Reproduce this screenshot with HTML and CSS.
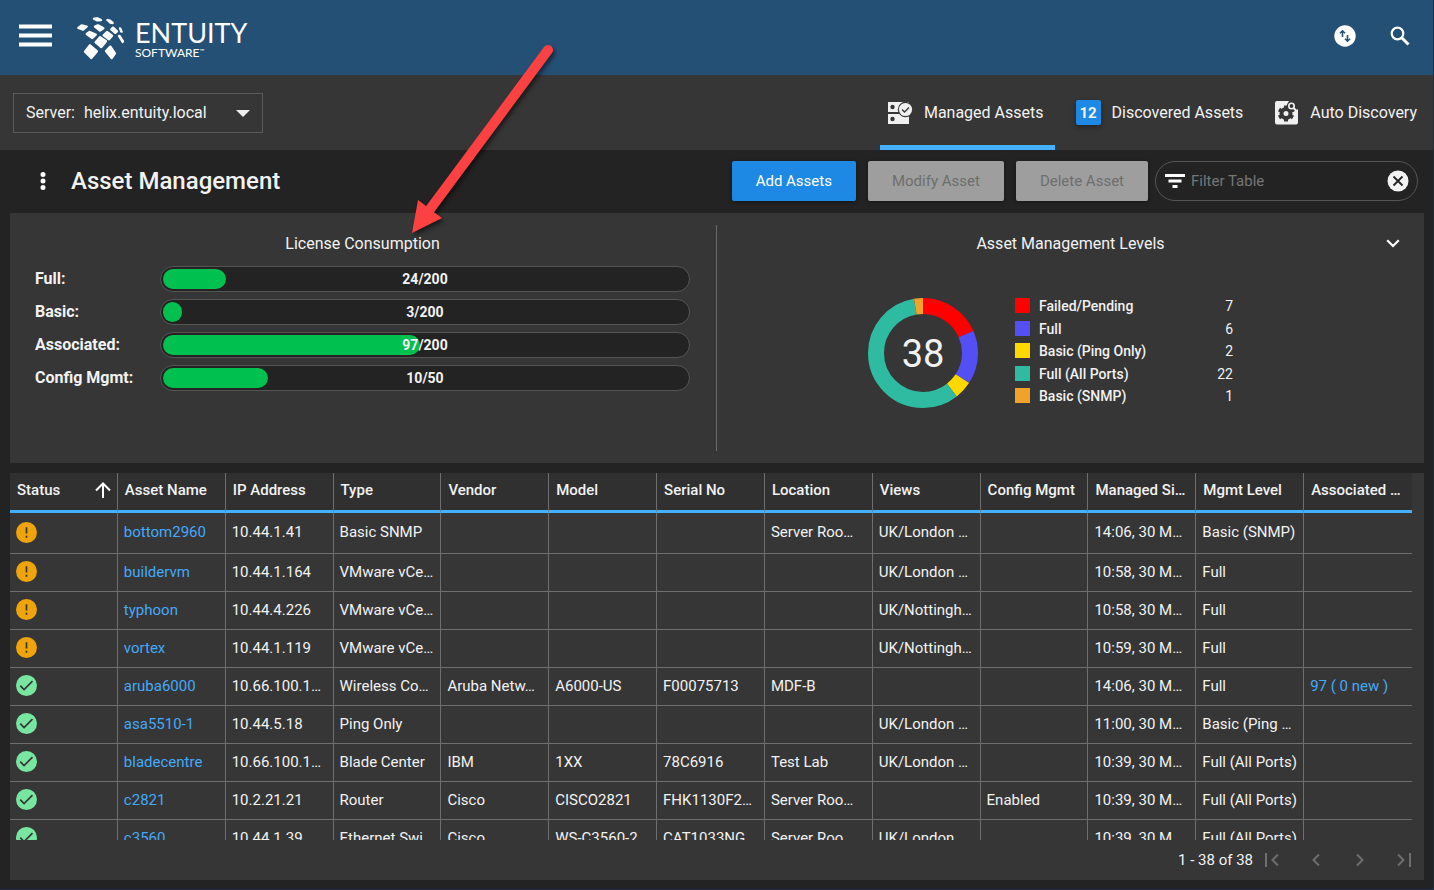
FILE: index.html
```html
<!DOCTYPE html>
<html lang="en">
<head>
<meta charset="utf-8">
<title>Entuity - Asset Management</title>
<link rel="stylesheet" href="styles.css">
</head>
<body>
<svg class="defs" aria-hidden="true">
  <symbol id="warn" viewBox="0 0 20 20"><circle cx="10" cy="10" r="10" fill="#eea40a"/><path d="M10 5v6M10 13v2" stroke="#363636" stroke-width="1.600"/></symbol>
  <symbol id="ok" viewBox="0 0 20 20"><circle cx="10" cy="10" r="10" fill="#78e6a0"/><path d="M4 10.200l3.700 3.700 8-8" fill="none" stroke="#363636" stroke-width="1.600"/></symbol>
</svg>
<div class="app">
  <header class="topbar">
    <button class="icon-btn" aria-label="Menu"><svg width="34" height="24" viewBox="0 0 34 24"><path d="M0 2.500h33M0 11.500h33M0 20.500h33" stroke="#fff" stroke-width="4"/></svg></button>
    <a class="logo" href="#" aria-label="Entuity Software">
      <svg width="50" height="44" viewBox="228 48 150 132" fill="#fff" stroke="#fff" stroke-width="7" stroke-linejoin="round">
        <path d="M282 56l10-1 11 5-11 1zM322 60l8 2 8 7-7-1zM235 84l10-8 15 4-11 9zM285 80l9-4 16 9-10 7zM334 88l5-5 12 11-5 5zM360 85l1 1 4 9-1 0zM260 102l9-6 18 8-10 10zM311 106l10-10 15 11-9 11zM357 108l2 0 10 16-1 2zM287 127l13-15 18 12-14 17zM255 155l15-19 21 18-17 20zM318 153l13-13 14 20-10 14z"/>
      </svg>
      <span class="logo-text"><span class="logo-name">ENTUITY</span><span class="logo-sub">SOFTWARE<small>™</small></span></span>
    </a>
    <div class="top-actions">
      <button class="icon-btn" aria-label="Transfers"><svg width="22" height="22" viewBox="0 0 22 22"><circle cx="11" cy="11" r="10.700" fill="#fff"/><path d="M8.500 12V6M6 8.300l2.500-2.500 2.500 2.500M13.500 10v6M11 13.700l2.500 2.500 2.500-2.500" fill="none" stroke="#255075" stroke-width="1.600"/></svg></button>
      <button class="icon-btn" aria-label="Search"><svg width="20" height="20" viewBox="0 0 20 20" fill="none" stroke="#fff"><circle cx="7.500" cy="7.500" r="5.800" stroke-width="2.200"/><path d="M12 12l6.500 6.500" stroke-width="3"/></svg></button>
    </div>
  </header>

  <div class="subbar">
    <div class="server">
      <label for="server">Server:</label>
      <select id="server"><option>helix.entuity.local</option></select>
      <svg class="caret" width="14" height="7" viewBox="0 0 14 7"><path d="M0 0h14l-7 7z" fill="#eee"/></svg>
    </div>
    <nav class="tabs">
      <a class="tab active" href="#"><svg width="25" height="24" viewBox="0 0 25 24"><path fill="#f0f0f0" d="M0 1h21v10H0zM0 13h21v10H0z"/><g fill="#363636"><circle cx="4.500" cy="6" r="2.200"/><circle cx="4.500" cy="18" r="2.200"/><circle cx="17.500" cy="8.500" r="7.700"/></g><circle cx="17.500" cy="8.500" r="6.600" fill="#f0f0f0"/><path d="M14 8.500l2.500 2.500 4.500-4.500" fill="none" stroke="#363636" stroke-width="1.300"/></svg>Managed Assets</a>
      <a class="tab" href="#"><span class="badge">12</span>Discovered Assets</a>
      <a class="tab" href="#"><svg width="24" height="24" viewBox="0 0 24 24"><path fill="#f0f0f0" d="M2 0h12l-2 4 2 5 4 2 5-3v13.500a2 2 0 0 1-2 2H2a2 2 0 0 1-2-2V2a2 2 0 0 1 2-2z"/><circle cx="11" cy="12.500" r="4.500" fill="none" stroke="#363636" stroke-width="4"/><path d="M11 4.500v3M11 17.500v3M4 8.500l2.700 1.600M15.300 14.900l2.700 1.600M4 16.500l2.700-1.600M15.300 10.100l2.700-1.600" stroke="#363636" stroke-width="4"/><circle cx="16.500" cy="5" r="4.600" fill="#363636"/><circle cx="16.500" cy="5" r="2.700" fill="none" stroke="#f0f0f0" stroke-width="1.600"/><path d="M18.500 7l3 3" stroke="#f0f0f0" stroke-width="2"/></svg>Auto Discovery</a>
    </nav>
  </div>

  <main class="main">
    <div class="toolbar">
      <button class="icon-btn kebab" aria-label="More options"><svg width="6" height="18" viewBox="0 0 6 18" fill="#fff"><circle cx="3" cy="2.500" r="2.500"/><circle cx="3" cy="9" r="2.500"/><circle cx="3" cy="15.500" r="2.500"/></svg></button>
      <h1>Asset Management</h1>
      <div class="actions">
        <button class="btn primary">Add Assets</button>
        <button class="btn" disabled>Modify Asset</button>
        <button class="btn" disabled>Delete Asset</button>
      </div>
      <div class="filter">
        <svg width="20" height="14" viewBox="0 0 20 14"><path d="M0 1.500h20M3.500 7h13M7.500 12.500h5" stroke="#fff" stroke-width="3"/></svg>
        <input type="text" placeholder="Filter Table" aria-label="Filter Table">
        <button class="icon-btn" aria-label="Clear filter"><svg width="22" height="22" viewBox="0 0 22 22"><circle cx="11" cy="11" r="10.500" fill="#f2f2f2"/><path d="M6.500 6.500l9 9M15.500 6.500l-9 9" stroke="#232323" stroke-width="1.800"/></svg></button>
      </div>
    </div>

    <div class="summary">
      <section class="license">
        <h2>License Consumption</h2>
        <div class="meter-row"><span class="meter-label">Full:</span><div class="meter"><div class="fill" style="width:12%"></div><span class="value">24/200</span></div></div>
        <div class="meter-row"><span class="meter-label">Basic:</span><div class="meter"><div class="fill" style="width:2%"></div><span class="value">3/200</span></div></div>
        <div class="meter-row"><span class="meter-label">Associated:</span><div class="meter"><div class="fill" style="width:49%"></div><span class="value">97/200</span></div></div>
        <div class="meter-row"><span class="meter-label">Config Mgmt:</span><div class="meter"><div class="fill" style="width:20%"></div><span class="value">10/50</span></div></div>
      </section>
      <section class="levels">
        <h2>Asset Management Levels</h2>
        <button class="icon-btn collapse" aria-label="Collapse"><svg width="14" height="9" viewBox="0 0 14 9"><path d="M1.200 1.200L7 7l5.800-5.800" fill="none" stroke="#fff" stroke-width="2.200"/></svg></button>
        <div class="chart">
          <div class="donut">
            <svg width="110" height="110" viewBox="0 0 110 110" fill="none" stroke-width="16">
              <g transform="rotate(-90 55 55)">
                <circle cx="55" cy="55" r="47" stroke="#ff0000" pathLength="38" stroke-dasharray="7 31"/>
                <circle cx="55" cy="55" r="47" stroke="#544ff5" pathLength="38" stroke-dasharray="6 32" stroke-dashoffset="-7"/>
                <circle cx="55" cy="55" r="47" stroke="#ffd800" pathLength="38" stroke-dasharray="2 36" stroke-dashoffset="-13"/>
                <circle cx="55" cy="55" r="47" stroke="#2fbba2" pathLength="38" stroke-dasharray="22 16" stroke-dashoffset="-15"/>
                <circle cx="55" cy="55" r="47" stroke="#f2a229" pathLength="38" stroke-dasharray="1 37" stroke-dashoffset="-37"/>
              </g>
            </svg>
            <span class="total">38</span>
          </div>
          <ul class="legend">
            <li><i class="swatch failed"></i><b>Failed/Pending</b><span>7</span></li>
            <li><i class="swatch full"></i><b>Full</b><span>6</span></li>
            <li><i class="swatch ping"></i><b>Basic (Ping Only)</b><span>2</span></li>
            <li><i class="swatch ports"></i><b>Full (All Ports)</b><span>22</span></li>
            <li><i class="swatch snmp"></i><b>Basic (SNMP)</b><span>1</span></li>
          </ul>
        </div>
      </section>
    </div>

    <div class="grid-panel">
      <div class="grid-scroll">
        <table>
          <thead><tr>
            <th><span class="sort">Status<svg width="16" height="16" viewBox="0 0 16 16" fill="none" stroke="#fff" stroke-width="2"><path d="M8 16V1.500M1 8.500l7-7 7 7"/></svg></span></th>
            <th>Asset Name</th><th>IP Address</th><th>Type</th><th>Vendor</th><th>Model</th><th>Serial No</th><th>Location</th><th>Views</th><th>Config Mgmt</th><th>Managed Si…</th><th>Mgmt Level</th><th>Associated …</th>
          </tr></thead>
          <tbody>
            <tr><td><svg class="st"><use href="#warn"/></svg></td><td><a href="#">bottom2960</a></td><td>10.44.1.41</td><td>Basic SNMP</td><td></td><td></td><td></td><td>Server Roo…</td><td>UK/London …</td><td></td><td>14:06, 30 M…</td><td>Basic (SNMP)</td><td></td></tr>
            <tr><td><svg class="st"><use href="#warn"/></svg></td><td><a href="#">buildervm</a></td><td>10.44.1.164</td><td>VMware vCe…</td><td></td><td></td><td></td><td></td><td>UK/London …</td><td></td><td>10:58, 30 M…</td><td>Full</td><td></td></tr>
            <tr><td><svg class="st"><use href="#warn"/></svg></td><td><a href="#">typhoon</a></td><td>10.44.4.226</td><td>VMware vCe…</td><td></td><td></td><td></td><td></td><td>UK/Nottingh…</td><td></td><td>10:58, 30 M…</td><td>Full</td><td></td></tr>
            <tr><td><svg class="st"><use href="#warn"/></svg></td><td><a href="#">vortex</a></td><td>10.44.1.119</td><td>VMware vCe…</td><td></td><td></td><td></td><td></td><td>UK/Nottingh…</td><td></td><td>10:59, 30 M…</td><td>Full</td><td></td></tr>
            <tr><td><svg class="st"><use href="#ok"/></svg></td><td><a href="#">aruba6000</a></td><td>10.66.100.1…</td><td>Wireless Co…</td><td>Aruba Netw…</td><td>A6000-US</td><td>F00075713</td><td>MDF-B</td><td></td><td></td><td>14:06, 30 M…</td><td>Full</td><td><a href="#">97 ( 0 new )</a></td></tr>
            <tr><td><svg class="st"><use href="#ok"/></svg></td><td><a href="#">asa5510-1</a></td><td>10.44.5.18</td><td>Ping Only</td><td></td><td></td><td></td><td></td><td>UK/London …</td><td></td><td>11:00, 30 M…</td><td>Basic (Ping …</td><td></td></tr>
            <tr><td><svg class="st"><use href="#ok"/></svg></td><td><a href="#">bladecentre</a></td><td>10.66.100.1…</td><td>Blade Center</td><td>IBM</td><td>1XX</td><td>78C6916</td><td>Test Lab</td><td>UK/London …</td><td></td><td>10:39, 30 M…</td><td>Full (All Ports)</td><td></td></tr>
            <tr><td><svg class="st"><use href="#ok"/></svg></td><td><a href="#">c2821</a></td><td>10.2.21.21</td><td>Router</td><td>Cisco</td><td>CISCO2821</td><td>FHK1130F2…</td><td>Server Roo…</td><td></td><td>Enabled</td><td>10:39, 30 M…</td><td>Full (All Ports)</td><td></td></tr>
            <tr><td><svg class="st"><use href="#ok"/></svg></td><td><a href="#">c3560</a></td><td>10.44.1.39</td><td>Ethernet Swi…</td><td>Cisco</td><td>WS-C3560-2…</td><td>CAT1033NG…</td><td>Server Roo…</td><td>UK/London …</td><td></td><td>10:39, 30 M…</td><td>Full (All Ports)</td><td></td></tr>
          </tbody>
        </table>
      </div>
      <footer class="pager">
        <span>1 - 38 of 38</span>
        <button class="icon-btn" aria-label="First page" disabled><svg width="14" height="14" viewBox="0 0 14 14"><path d="M1 0v14M13 1.500L7.500 7l5.500 5.500"/></svg></button>
        <button class="icon-btn" aria-label="Previous page" disabled><svg width="14" height="14" viewBox="0 0 14 14"><path d="M10 1.500L4.500 7l5.500 5.500"/></svg></button>
        <button class="icon-btn" aria-label="Next page" disabled><svg width="14" height="14" viewBox="0 0 14 14"><path d="M4 1.500l5.500 5.500L4 12.500"/></svg></button>
        <button class="icon-btn" aria-label="Last page" disabled><svg width="14" height="14" viewBox="0 0 14 14"><path d="M13 0v14M1 1.500l5.500 5.500L1 12.500"/></svg></button>
      </footer>
    </div>
  </main>
  <svg class="pointer" width="160" height="210" viewBox="400 35 160 210" aria-hidden="true"><path d="M548 50L428 212" stroke="#fc4142" stroke-width="10" stroke-linecap="round"/><path d="M412 233l6-33 8 6 9 7 7 5z" fill="#fc4142"/></svg>
</div>
</body>
</html>
```
FILE: styles.css
```css
* { box-sizing: border-box; }
body {
  margin: 0;
  background: #232323;
  color: #f2f2f2;
  font: 15px/20px Roboto, sans-serif;
}
a { color: #45a9f9; text-decoration: none; }
button, input, select { font: inherit; color: inherit; }
svg { display: block; flex: none; }
.defs { position: absolute; width: 0; height: 0; }
.icon-btn {
  display: flex;
  padding: 0;
  border: 0;
  background: none;
}
.app {
  position: relative;
  display: flex;
  flex-direction: column;
  height: 100vh;
  border-right: 1px solid #1b2d47;
  border-bottom: 1px solid #1b2d47;
}

.topbar {
  display: flex;
  align-items: center;
  height: 75px;
  padding: 0 23px 0 19px;
  background: #255075;
}
.topbar .icon-btn { padding-bottom: 3px; }
.logo {
  display: flex;
  align-items: center;
  gap: 9px;
  margin-left: 23px;
  color: #fff;
  font-family: Lato, sans-serif;
}
.logo-text { display: flex; flex-direction: column; padding-top: 2px; }
.logo-name { font-size: 27px; line-height: 28px; }
.logo-sub { font-size: 12px; line-height: 12px; }
.logo-sub small { font-size: 6px; vertical-align: top; line-height: 8px; }
.top-actions {
  display: flex;
  align-items: center;
  gap: 34px;
  margin-left: auto;
}

.subbar {
  display: flex;
  align-items: center;
  justify-content: space-between;
  height: 75px;
  padding: 0 5px 0 13px;
  background: #363636;
  font-size: 16px;
}
.server {
  position: relative;
  display: flex;
  align-items: center;
  gap: 9px;
  width: 250px;
  height: 40px;
  padding-left: 12px;
  border: 1px solid #5a5a5a;
}
.server select {
  flex: 1;
  height: 38px;
  padding: 0;
  border: 0;
  background: none;
  appearance: none;
}
.caret { position: absolute; right: 12px; top: 16px; pointer-events: none; }
.tabs { display: flex; align-self: stretch; gap: 13px; }
.tab {
  display: flex;
  align-items: center;
  gap: 11px;
  padding: 5px 11px 0 8px;
  border-bottom: 5px solid transparent;
  color: #f2f2f2;
}
.tab.active { border-color: #45b0fb; }
.badge {
  width: 25px;
  height: 25px;
  border-radius: 2px;
  background: #1e88e5;
  box-shadow: 0 2px 5px rgba(0, 0, 0, .4);
  font-size: 15px;
  font-weight: 700;
  line-height: 26px;
  text-align: center;
}

.main {
  display: flex;
  flex: 1;
  flex-direction: column;
  min-height: 0;
  padding: 0 9px 9px 10px;
}
.toolbar {
  display: flex;
  align-items: center;
  height: 63px;
  padding: 0 6px 1px 30px;
}
h1 {
  margin: 0 auto 0 25px;
  font-size: 24px;
  font-weight: 500;
  line-height: 32px;
}
.actions { display: flex; gap: 12px; margin-right: 7px; }
.btn {
  height: 40px;
  padding: 0 24px;
  border: 0;
  border-radius: 2px;
  background: #9e9e9e;
  color: #6e6e6e;
  box-shadow: 0 1px 4px rgba(0, 0, 0, .4);
}
.btn.primary { background: #1e88e5; color: #fff; }
.filter {
  display: flex;
  align-items: center;
  gap: 6px;
  width: 263px;
  height: 40px;
  padding: 0 8px 0 9px;
  border: 1px solid #555;
  border-radius: 20px;
}
.filter input {
  flex: 1;
  min-width: 0;
  padding: 0;
  border: 0;
  outline: 0;
  background: none;
}
.filter input::placeholder { color: #767676; opacity: 1; }

.summary {
  display: grid;
  grid-template-columns: minmax(0, 1fr) minmax(0, 1fr);
  height: 250px;
  padding: 12px 0;
  background: #363636;
}
.levels { position: relative; }
.license {
  padding: 0 26px 0 25px;
  border-right: 1px solid #6a6a6a;
}
h2 {
  margin: 0;
  padding: 9px 0 7px;
  font-size: 16px;
  font-weight: 400;
  line-height: 20px;
  text-align: center;
}
.license h2 { margin-bottom: 5px; }
.meter-row {
  display: flex;
  align-items: center;
  margin-bottom: 7px;
}
.meter-label { width: 125px; font-size: 16px; font-weight: 700; }
.meter {
  position: relative;
  flex: 1;
  height: 26px;
  padding: 2px;
  border: 1px solid #555;
  border-radius: 13px;
  background: #232323;
}
.fill {
  min-width: 19px;
  height: 20px;
  border-radius: 10px;
  background: #00c04f;
}
.value {
  position: absolute;
  inset: 0;
  font-size: 14px;
  font-weight: 700;
  line-height: 24px;
  text-align: center;
}
.collapse { position: absolute; top: 14px; right: 24px; }
.chart {
  display: flex;
  justify-content: center;
  gap: 37px;
  padding: 37px 40px 0 0;
}
.donut { position: relative; }
.total {
  position: absolute;
  inset: 0;
  font-size: 38px;
  line-height: 112px;
  text-align: center;
}
.legend {
  display: flex;
  flex-direction: column;
  justify-content: space-between;
  width: 218px;
  margin: 0;
  padding: 0 0 4px;
  list-style: none;
  font-size: 14px;
  line-height: 16px;
}
.legend li { display: flex; gap: 9px; }
.legend b { flex: 1; font-weight: 500; }
.swatch { width: 15px; height: 15px; }
.failed { background: #ff0000; }
.full { background: #544ff5; }
.ping { background: #ffd800; }
.ports { background: #2fbba2; }
.snmp { background: #f2a229; }

.grid-panel {
  display: flex;
  flex: 1;
  flex-direction: column;
  min-height: 0;
  margin-top: 10px;
  background: #363636;
}
.grid-scroll { flex: 1; min-height: 0; overflow: hidden; padding-right: 12px; }
table {
  width: 100%;
  table-layout: fixed;
  border-collapse: separate;
  border-spacing: 0;
}
th, td {
  overflow: hidden;
  border-right: 1px solid #6e6e6e;
  text-align: left;
  white-space: nowrap;
}
th:last-child, td:last-child { border-right: 0; }
th {
  height: 40px;
  padding: 0 6px 3px 7px;
  border-bottom: 3px solid #45b0fb;
  background: #303030;
  font-weight: 500;
}
td {
  height: 38px;
  padding: 0 6px 2px;
  border-bottom: 1px solid #6e6e6e;
}
tbody tr:first-child td { height: 41px; }
.sort { display: flex; align-items: center; justify-content: space-between; }
.st { width: 21px; height: 21px; }
.pager {
  display: flex;
  align-items: center;
  gap: 30px;
  height: 40px;
  padding-right: 13px;
}
.pager span { margin: 0 -18px 0 auto; }
.pager path { fill: none; stroke: #6e6e6e; stroke-width: 2; }

.pointer {
  position: absolute;
  left: 400px;
  top: 35px;
  pointer-events: none;
  filter: drop-shadow(2px 3px 2px rgba(0, 0, 0, .5));
}
```
